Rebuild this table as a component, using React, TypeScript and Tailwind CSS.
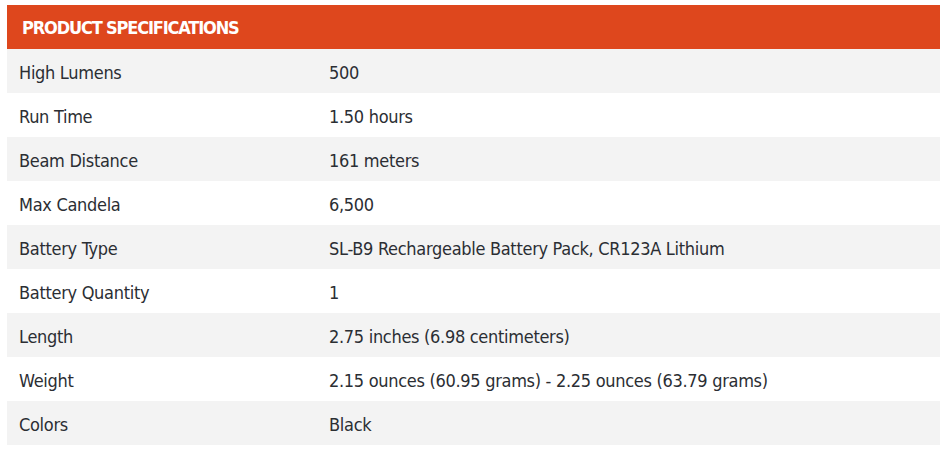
const specs: [string, string][] = [
  ['High Lumens', '500'],
  ['Run Time', '1.50 hours'],
  ['Beam Distance', '161 meters'],
  ['Max Candela', '6,500'],
  ['Battery Type', 'SL-B9 Rechargeable Battery Pack, CR123A Lithium'],
  ['Battery Quantity', '1'],
  ['Length', '2.75 inches (6.98 centimeters)'],
  ['Weight', '2.15 ounces (60.95 grams) - 2.25 ounces (63.79 grams)'],
  ['Colors', 'Black'],
];

export default function App() {
  return (
    <div className="w-[947px] h-[456px] bg-white pt-[5px] pl-[7px] font-['DejaVu_Sans_Condensed','DejaVu_Sans',sans-serif]">
      <div className="w-[933px]">
        <div className="h-[44px] bg-[#de471d] flex items-center pl-[15px]">
          <h2 className="text-white font-bold text-[18px] tracking-[-1.15px] uppercase">
            Product Specifications
          </h2>
        </div>
        {specs.map(([label, value], i) => (
          <div
            key={label}
            className={`h-[44px] flex items-center pt-[3px] text-[#2b2e33] text-[18px] tracking-[-0.3px] ${
              i % 2 === 0 ? 'bg-[#f3f3f3]' : 'bg-white'
            }`}
          >
            <div className="w-[310px] pl-[12px]">{label}</div>
            <div className="pl-[12px]">{value}</div>
          </div>
        ))}
      </div>
    </div>
  );
}
